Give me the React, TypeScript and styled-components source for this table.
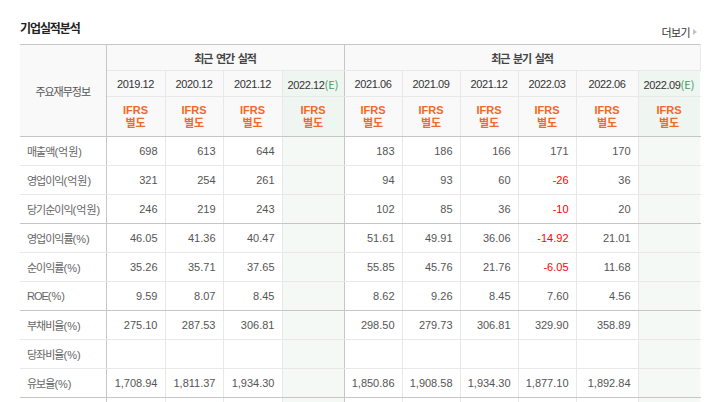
import React, { FC } from 'react';
import styled, { createGlobalStyle } from 'styled-components';

const GlobalStyle = createGlobalStyle`
    html, body {
        margin: 0;
        padding: 0;
        background: #fff;
    }
    body {
        font-family: "Liberation Sans", "Noto Sans CJK KR", sans-serif;
        color: #555;
    }
`;

const DARK = '#c6c6c6';
const LIGHT = '#e8e8e8';
const KR = `"Noto Sans CJK KR", "Liberation Sans", sans-serif`;
const MIXED = `"Liberation Sans", "Noto Sans CJK KR", sans-serif`;

type Row = { label: string; annual: string[]; quarter: string[]; groupEnd?: boolean };

const annualYears = ['2019.12', '2020.12', '2021.12'];
const quarterYears = ['2021.06', '2021.09', '2021.12', '2022.03', '2022.06'];

const rows: Row[] = [
    { label: '매출액(억원)', annual: ['698', '613', '644'], quarter: ['183', '186', '166', '171', '170'] },
    { label: '영업이익(억원)', annual: ['321', '254', '261'], quarter: ['94', '93', '60', '-26', '36'] },
    { label: '당기순이익(억원)', annual: ['246', '219', '243'], quarter: ['102', '85', '36', '-10', '20'], groupEnd: true },
    { label: '영업이익률(%)', annual: ['46.05', '41.36', '40.47'], quarter: ['51.61', '49.91', '36.06', '-14.92', '21.01'] },
    { label: '순이익률(%)', annual: ['35.26', '35.71', '37.65'], quarter: ['55.85', '45.76', '21.76', '-6.05', '11.68'] },
    { label: 'ROE(%)', annual: ['9.59', '8.07', '8.45'], quarter: ['8.62', '9.26', '8.45', '7.60', '4.56'], groupEnd: true },
    { label: '부채비율(%)', annual: ['275.10', '287.53', '306.81'], quarter: ['298.50', '279.73', '306.81', '329.90', '358.89'] },
    { label: '당좌비율(%)', annual: ['', '', ''], quarter: ['', '', '', '', ''] },
    { label: '유보율(%)', annual: ['1,708.94', '1,811.37', '1,934.30'], quarter: ['1,850.86', '1,908.58', '1,934.30', '1,877.10', '1,892.84'], groupEnd: true },
    // next row starts just below the visible area
    { label: '', annual: ['', '', ''], quarter: ['', '', '', '', ''] },
];

const colWidths = [86, 59, 58, 59, 62, 58, 58, 58, 58, 62, 62];

const LabelText: FC<{text: string}> = ({text}) => {
    const m = text.match(/^(.*?)(\(.*\))$/);
    if (!m) return <>{text}</>;
    return <>{m[1]}<Unit>{m[2]}</Unit></>;
}

const App: FC = () => {
    return (<>
        <GlobalStyle/>
        <Section>
            <Header>
                <Title>기업실적분석</Title>
                <More href="#">더보기</More>
            </Header>
            <Table>
                <colgroup>
                    {colWidths.map((w, i) => <col key={i} style={{ width: w }}/>)}
                </colgroup>
                <thead>
                    <tr>
                        <HeadCell rowSpan={3} $rightDark>주요재무정보</HeadCell>
                        <GroupCell colSpan={4} $rightDark>최근 연간 실적</GroupCell>
                        <GroupCell colSpan={6}>최근 분기 실적</GroupCell>
                    </tr>
                    <tr>
                        {annualYears.map(y => <YearCell key={y}>{y}</YearCell>)}
                        <YearCell $estimate $rightDark>2022.12<Est>(E)</Est></YearCell>
                        {quarterYears.map(y => <YearCell key={'q' + y}>{y}</YearCell>)}
                        <YearCell $estimate $last>2022.09<Est>(E)</Est></YearCell>
                    </tr>
                    <tr>
                        {colWidths.slice(1).map((_, i) => (
                            <StandardCell key={i} $estimate={i === 3 || i === 9} $rightDark={i === 3} $last={i === 9}>
                                IFRS<br/>별도
                            </StandardCell>
                        ))}
                    </tr>
                </thead>
                <tbody>
                    {rows.map((r, n) => (
                        <tr key={n}>
                            <Label $groupEnd={r.groupEnd}><LabelText text={r.label}/></Label>
                            {r.annual.map((v, i) => <Value key={i} $groupEnd={r.groupEnd} $neg={v.startsWith('-')}>{v}</Value>)}
                            <Value $groupEnd={r.groupEnd} $estimate $rightDark/>
                            {r.quarter.map((v, i) => <Value key={'q' + i} $groupEnd={r.groupEnd} $neg={v.startsWith('-')}>{v}</Value>)}
                            <Value $groupEnd={r.groupEnd} $estimate $last/>
                        </tr>
                    ))}
                </tbody>
            </Table>
        </Section>
    </>);
}

export default App;

const Section = styled.div`
    width: 680px;
    padding: 0 0 0 20px;
`;

const Header = styled.div`
    display: flex;
    justify-content: space-between;
    align-items: flex-end;
    height: 44px;
    padding-bottom: 6px;
    box-sizing: border-box;
`;

const Title = styled.h3`
    margin: 0 0 3px;
    font-family: ${KR};
    font-size: 12px;
    font-weight: 700;
    letter-spacing: -1.1px;
    color: #222;
    line-height: 14px;
`;

const More = styled.a`
    position: relative;
    padding-right: 10px;
    font-family: ${KR};
    font-size: 11px;
    letter-spacing: -0.6px;
    color: #333;
    text-decoration: none;
    line-height: 12px;

    &::after {
        content: '';
        position: absolute;
        right: 3px;
        top: 3px;
        border-style: solid;
        border-width: 3px 0 3px 4px;
        border-color: transparent transparent transparent #c4c4c4;
    }
`;

const Table = styled.table`
    width: 680px;
    table-layout: fixed;
    border-collapse: collapse;
    border-top: 1px solid ${DARK};
`;

type CellProps = { $rightDark?: boolean; $last?: boolean; $estimate?: boolean; $groupEnd?: boolean; $neg?: boolean };

const BaseCell = styled.td<CellProps>`
    padding: 0;
    border-right: 1px solid ${p => p.$last ? 'transparent' : p.$rightDark ? DARK : LIGHT};
    border-bottom: 1px solid ${LIGHT};
    font-size: 11px;
    font-weight: 400;
`;

const HeadCell = styled(BaseCell).attrs({ as: 'th' })`
    background: #f9f9f9;
    border-bottom-color: ${DARK};
    font-family: ${KR};
    letter-spacing: -1px;
    color: #555;
    text-align: center;
`;

const GroupCell = styled(BaseCell).attrs({ as: 'th' })`
    height: 25px;
    background: #f9f9f9;
    font-family: ${KR};
    font-weight: 700;
    letter-spacing: -1px;
    word-spacing: 2px;
    color: #444;
    text-align: center;
`;

const YearCell = styled(BaseCell).attrs({ as: 'th' })`
    height: 25px;
    background: ${p => p.$estimate ? '#eff5f0' : '#f9f9f9'};
    color: #333;
    text-align: center;
    letter-spacing: -0.4px;
    white-space: nowrap;
`;

const Est = styled.span`
    color: #3d9a5e;
    font-family: ${KR};
    letter-spacing: 0;
`;

const StandardCell = styled(BaseCell).attrs({ as: 'th' })`
    height: 39px;
    background: ${p => p.$estimate ? '#eff5f0' : '#f9f9f9'};
    border-bottom-color: ${DARK};
    color: #f0682a;
    font-family: ${MIXED};
    font-weight: 700;
    line-height: 13px;
    text-align: center;
`;

const Label = styled(BaseCell)`
    height: 28px;
    padding-left: 7px;
    border-right-color: ${DARK};
    border-bottom-color: ${p => p.$groupEnd ? DARK : LIGHT};
    font-family: ${MIXED};
    letter-spacing: -1px;
    color: #666;
    white-space: nowrap;
`;

const Unit = styled.span`
    font-family: ${MIXED};
    letter-spacing: 0;
`;

const Value = styled(BaseCell)`
    height: 28px;
    padding-right: 7px;
    background: ${p => p.$estimate ? '#f5f9f6' : '#fff'};
    border-bottom-color: ${p => p.$groupEnd ? DARK : LIGHT};
    color: ${p => p.$neg ? '#f00' : '#555'};
    text-align: right;
    white-space: nowrap;
`;
